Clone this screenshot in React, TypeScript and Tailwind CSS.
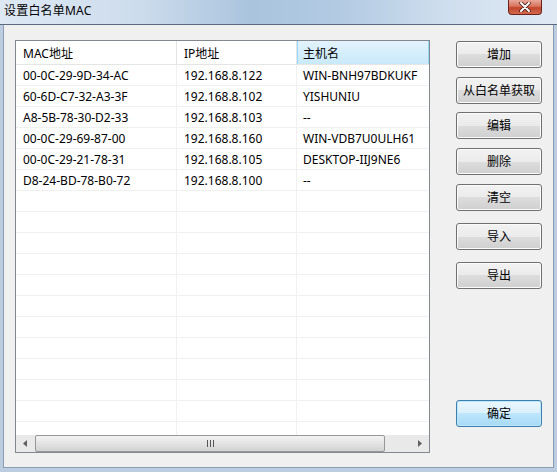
import React from "react";

const ROWS: [string, string, string][] = [
    ["00-0C-29-9D-34-AC", "192.168.8.122", "WIN-BNH97BDKUKF"],
    ["60-6D-C7-32-A3-3F", "192.168.8.102", "YISHUNIU"],
    ["A8-5B-78-30-D2-33", "192.168.8.103", "--"],
    ["00-0C-29-69-87-00", "192.168.8.160", "WIN-VDB7U0ULH61"],
    ["00-0C-29-21-78-31", "192.168.8.105", "DESKTOP-IIJ9NE6"],
    ["D8-24-BD-78-B0-72", "192.168.8.100", "--"],
];

const BUTTONS = [
    { label: "增加", mt: "mt-0" },
    { label: "从白名单获取", mt: "mt-[9px]" },
    { label: "编辑", mt: "mt-[8px]" },
    { label: "删除", mt: "mt-[9px]" },
    { label: "清空", mt: "mt-[9px]" },
    { label: "导入", mt: "mt-[12px]" },
    { label: "导出", mt: "mt-[12px]" },
];

function WinButton({
    label,
    className = "",
    primary = false,
}: {
    label: string;
    className?: string;
    primary?: boolean;
}) {
    return (
        <button
            type="button"
            className={
                "flex h-[27px] w-[86px] items-center justify-center rounded-[3px] border pt-[1px] text-[12px] text-black " +
                (primary
                    ? "border-[#3c7fb1] bg-[linear-gradient(#eaf6fd_0%,#d9f0fc_50%,#bee6fd_50%,#a7d9f5_100%)] shadow-[inset_0_0_0_1px_#bfe7fb] "
                    : "border-[#707070] bg-[linear-gradient(#f2f2f2_0%,#ebebeb_50%,#dddddd_50%,#cfcfcf_100%)] shadow-[inset_0_0_0_1px_#fbfbfb] ") +
                className
            }
        >
            {label}
        </button>
    );
}

function HScrollBar() {
    return (
        <div className="flex h-[17px] items-stretch bg-[#e9e9e9]">
            <div className="flex w-[19px] items-center justify-center">
                <svg width="5" height="7" viewBox="0 0 5 7">
                    <path d="M4 0 L0 3.5 L4 7 Z" fill="#606060" />
                </svg>
            </div>
            <div className="relative flex w-[350px] items-center justify-center rounded-[2px] border border-[#979797] bg-[linear-gradient(#f3f3f3,#e3e3e3_50%,#d2d2d2)]">
                <div className="flex gap-[2px]">
                    <span className="h-[7px] w-px bg-[#555]" />
                    <span className="h-[7px] w-px bg-[#555]" />
                    <span className="h-[7px] w-px bg-[#555]" />
                </div>
            </div>
            <div className="flex-1" />
            <div className="flex w-[19px] items-center justify-center">
                <svg width="5" height="7" viewBox="0 0 5 7">
                    <path d="M1 0 L5 3.5 L1 7 Z" fill="#606060" />
                </svg>
            </div>
        </div>
    );
}

export default function App() {
    const emptyRows = Array.from({ length: 14 });

    return (
        <div className="relative h-[472px] w-[557px] overflow-hidden bg-[#c7d7e8] font-['Noto_Sans','Noto_Sans_CJK_SC',sans-serif] text-[12px] text-black">
            {/* title bar */}
            <div className="flex h-[25px] items-start justify-between border-b border-[#5b6b7f] bg-[linear-gradient(90deg,#dde8f4_0%,#cddcec_25%,#aac4de_45%,#b3cbe3_62%,#cfdeee_80%,#dfe9f4_100%)]">
                <span className="pl-[4px] pt-[3px] leading-[16px] tracking-[0.2px]">
                    设置白名单MAC
                </span>
                <div className="mr-[15px] flex h-[15px] w-[34px] items-center justify-center rounded-b-[4px] border border-t-0 border-[#6b2218] bg-[linear-gradient(#e9a898_0%,#d6735e_45%,#c2452c_55%,#d16a4f_100%)]">
                    <svg width="12" height="10" viewBox="0 0 12 10">
                        <path
                            d="M2 1 L10 9 M10 1 L2 9"
                            stroke="#3a1410"
                            strokeWidth="3.4"
                            strokeLinecap="round"
                        />
                        <path
                            d="M2 1 L10 9 M10 1 L2 9"
                            stroke="#ffffff"
                            strokeWidth="2"
                            strokeLinecap="round"
                        />
                    </svg>
                </div>
            </div>

            {/* client area */}
            <div className="flex h-[447px] border-x-[3px] border-b-[4px] border-[#bccde0]">
                <div className="flex flex-1 border-x border-b border-[#8a9db3] bg-[#f0f0f0] pl-[11px] pt-[15px]">
                    {/* list view */}
                    <div className="flex h-[413px] w-[415px] flex-col border border-[#828790] bg-white">
                        <div className="grid h-[24px] grid-cols-[161px_120px_132px] border-b border-[#e5e5e5]">
                            <div className="flex items-center border-r border-[#e5e5e5] pl-[7px] pt-[2px]">
                                MAC地址
                            </div>
                            <div className="flex items-center border-r border-[#e5e5e5] pl-[7px] pt-[2px]">
                                IP地址
                            </div>
                            <div className="flex items-center border-x border-[#96d9f9] bg-[linear-gradient(#e3f3fd,#c9e9fa)] pl-[5px] pt-[2px]">
                                主机名
                            </div>
                        </div>
                        <div className="h-[370px] overflow-hidden">
                            {ROWS.map((r) => (
                                <div
                                    key={r[0]}
                                    className="grid h-[21px] grid-cols-[161px_120px_132px] border-b border-[#f0f0f0]"
                                >
                                    <div className="flex items-center border-r border-[#f0f0f0] pl-[7px] pt-[2px]">
                                        {r[0]}
                                    </div>
                                    <div className="flex items-center border-r border-[#f0f0f0] pl-[7px] pt-[2px]">
                                        {r[1]}
                                    </div>
                                    <div className="flex items-center pl-[6px] pt-[2px]">
                                        {r[2]}
                                    </div>
                                </div>
                            ))}
                            {emptyRows.map((_, i) => (
                                <div
                                    key={i}
                                    className="grid h-[21px] grid-cols-[161px_120px_132px] border-b border-[#f0f0f0]"
                                >
                                    <div className="border-r border-[#f0f0f0]" />
                                    <div className="border-r border-[#f0f0f0]" />
                                    <div />
                                </div>
                            ))}
                        </div>
                        <HScrollBar />
                    </div>

                    {/* buttons */}
                    <div className="ml-[26px] flex h-[413px] flex-col pt-[1px]">
                        {BUTTONS.map((b) => (
                            <WinButton key={b.label} label={b.label} className={b.mt} />
                        ))}
                        <div className="flex-1" />
                        <WinButton label="确定" primary className="mb-[26px]" />
                    </div>
                </div>
            </div>
        </div>
    );
}
